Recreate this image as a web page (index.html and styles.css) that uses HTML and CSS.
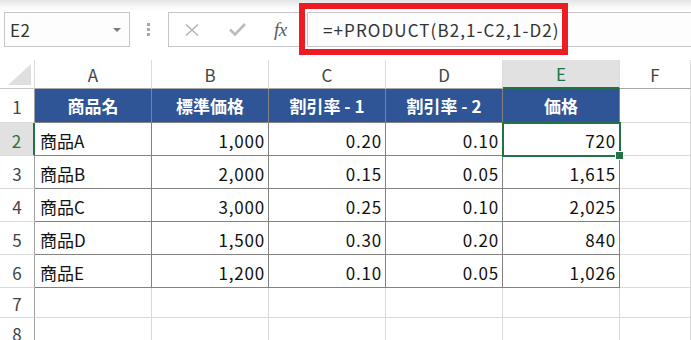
FILE: index.html
```html
<!DOCTYPE html>
<html lang="ja">
<head>
    <meta charset="UTF-8">
    <title>Book1 - Excel</title>
    <link rel="stylesheet" href="styles.css">
</head>
<body>

    <!-- Formula bar -->
    <div class="toolbar">
        <div class="namebox">
            <span class="ref">E2</span>
            <span class="caret"></span>
        </div>
        <div class="grip"><i></i><i></i><i></i></div>
        <div class="fxbtns">
            <svg class="ico-x" width="14" height="12" viewBox="0 0 14 12">
                <path d="M1 0.5 L13 11.5 M13 0.5 L1 11.5" stroke="#b8b8b8" stroke-width="1.6" fill="none"/>
            </svg>
            <svg class="ico-ok" width="17" height="13" viewBox="0 0 17 13">
                <path d="M1 6.5 L6 11.5 L16 1" stroke="#bcbcbc" stroke-width="2.6" fill="none"/>
            </svg>
            <span class="fx">fx</span>
        </div>
        <div class="formula">=+PRODUCT(B2,1-C2,1-D2)</div>
        <div class="mark"></div>
    </div>

    <!-- Sheet -->
    <div class="sheet">
        <div class="c corner">
            <svg width="23" height="21" viewBox="0 0 23 21"><polygon points="23,0 23,21 0,21" fill="#dfdfdf"/></svg>
        </div>
        <div class="c ch">A</div>
        <div class="c ch">B</div>
        <div class="c ch">C</div>
        <div class="c ch">D</div>
        <div class="c ch on">E</div>
        <div class="c ch">F</div>

        <div class="c rh">1</div>
        <div class="c t th">商品名</div>
        <div class="c t th">標準価格</div>
        <div class="c t th">割引率 - 1</div>
        <div class="c t th">割引率 - 2</div>
        <div class="c t th">価格</div>
        <div class="c"></div>

        <div class="c rh on">2</div>
        <div class="c t">商品A</div>
        <div class="c t n">1,000</div>
        <div class="c t n">0.20</div>
        <div class="c t n">0.10</div>
        <div class="c t n sel">720</div>
        <div class="c"></div>

        <div class="c rh">3</div>
        <div class="c t">商品B</div>
        <div class="c t n">2,000</div>
        <div class="c t n">0.15</div>
        <div class="c t n">0.05</div>
        <div class="c t n">1,615</div>
        <div class="c"></div>

        <div class="c rh">4</div>
        <div class="c t">商品C</div>
        <div class="c t n">3,000</div>
        <div class="c t n">0.25</div>
        <div class="c t n">0.10</div>
        <div class="c t n">2,025</div>
        <div class="c"></div>

        <div class="c rh">5</div>
        <div class="c t">商品D</div>
        <div class="c t n">1,500</div>
        <div class="c t n">0.30</div>
        <div class="c t n">0.20</div>
        <div class="c t n">840</div>
        <div class="c"></div>

        <div class="c rh">6</div>
        <div class="c t">商品E</div>
        <div class="c t n">1,200</div>
        <div class="c t n">0.10</div>
        <div class="c t n">0.05</div>
        <div class="c t n">1,026</div>
        <div class="c"></div>

        <div class="c rh">7</div>
        <div class="c"></div>
        <div class="c"></div>
        <div class="c"></div>
        <div class="c"></div>
        <div class="c"></div>
        <div class="c"></div>

        <div class="c rh">8</div>
        <div class="c"></div>
        <div class="c"></div>
        <div class="c"></div>
        <div class="c"></div>
        <div class="c"></div>
        <div class="c"></div>
    </div>

</body>
</html>
```

FILE: styles.css
```css
/* General */
* {
    margin: 0;
    padding: 0;
    box-sizing: border-box;
}
body {
    width: 691px;
    height: 340px;
    overflow: hidden;
    background: #ffffff;
    font-family: "Noto Sans CJK JP", sans-serif;
    color: #111111;
}

/* Formula bar */
.toolbar {
    position: relative;
    height: 60px;
    display: flex;
    align-items: flex-start;
    padding-top: 12px;
    background: linear-gradient(#e4e4e4 0px, #f6f6f6 6px, #ffffff 11px);
}
.namebox {
    margin-left: 4px;
    width: 126px;
    height: 35px;
    border: 1px solid #c6c6c6;
    background: #fdfdfd;
    display: flex;
    align-items: center;
    justify-content: space-between;
    padding: 0 8px 0 5px;
}
.ref {
    font-size: 17px;
    color: #333333;
    letter-spacing: 0.5px;
}
.caret {
    width: 0;
    height: 0;
    border-left: 4px solid transparent;
    border-right: 4px solid transparent;
    border-top: 4px solid #7a7a7a;
}
.grip {
    margin: 11px 0 0 17px;
    width: 4px;
    display: flex;
    flex-direction: column;
    gap: 2px;
}
.grip i {
    display: block;
    width: 3px;
    height: 3px;
    background: #a8a8a8;
}
.fxbtns {
    margin-left: 17px;
    width: 136px;
    height: 35px;
    border: 1px solid #c6c6c6;
    border-right: none;
    display: flex;
    align-items: center;
    padding-left: 16px;
}
.ico-ok {
    margin-left: 30px;
}
.fx {
    margin-left: 28px;
    font-family: "Liberation Serif", serif;
    font-style: italic;
    font-size: 19px;
    color: #5a5a5a;
    letter-spacing: -0.5px;
}
.formula {
    margin-left: 3px;
    flex: 1;
    height: 35px;
    border: 1px solid #c6c6c6;
    border-right: none;
    background: #fdfdfd;
    display: flex;
    align-items: center;
    padding-left: 15px;
    font-size: 17px;
    letter-spacing: 1.1px;
    color: #333333;
}
.mark {
    position: absolute;
    left: 299px;
    top: 3px;
    width: 269px;
    height: 52px;
    border: 6px solid #ed1c24;
}

/* Sheet grid */
.sheet {
    display: grid;
    grid-template-columns: 35px 117px 117px 117px 117px 117px 1fr;
    grid-template-rows: 29px 34px 33px 33px 33px 33px 33px 30px 30px;
}
.c {
    border-right: 1px solid #dadada;
    border-bottom: 1px solid #dadada;
    display: flex;
    align-items: center;
    padding: 2px 4px 0 5px;
    font-size: 17px;
    white-space: nowrap;
}
.corner {
    align-items: flex-end;
    justify-content: flex-end;
    padding: 0 3px 3px 0;
    border-bottom-color: #c8c8c8;
}
.ch {
    justify-content: center;
    color: #444444;
    border-right-color: #dcdcdc;
    border-bottom-color: #a9a9a9;
    padding: 0;
}
.rh {
    justify-content: center;
    color: #444444;
    border-right-color: #a0a0a0;
    border-bottom-color: #dadada;
    padding: 2px 0 0 0;
}
.ch.on {
    background: #e1e1e1;
    color: #217346;
    border-bottom: 2px solid #217346;
}
.rh.on {
    background: #e1e1e1;
    color: #217346;
    border-right: 2px solid #217346;
}

/* Data table */
.t {
    border-right-color: #828282;
    border-bottom-color: #828282;
}
.th {
    background: #2f5597;
    color: #ffffff;
    font-weight: bold;
    justify-content: center;
    padding: 0;
}
.n {
    justify-content: flex-end;
    padding-right: 3px;
    letter-spacing: 0.8px;
}
.sel {
    position: relative;
}
.sel::after {
    content: "";
    position: absolute;
    left: -1px;
    top: -1px;
    right: -2px;
    bottom: -2px;
    border: 2px solid #217346;
}
.sel::before {
    content: "";
    position: absolute;
    right: -5px;
    bottom: -5px;
    width: 7px;
    height: 7px;
    background: #217346;
    border: 1px solid #ffffff;
    z-index: 2;
}
```
